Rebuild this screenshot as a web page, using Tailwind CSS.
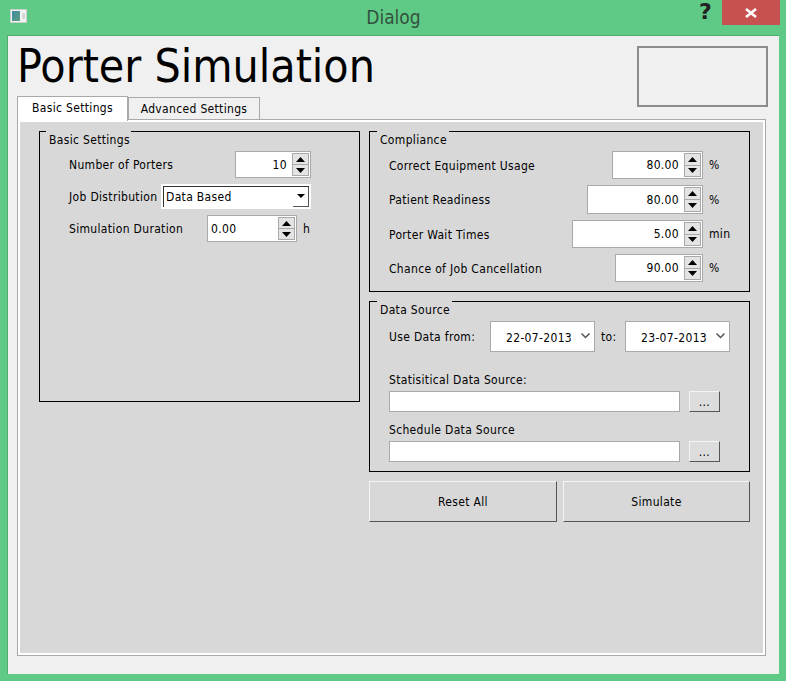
<!DOCTYPE html>
<html lang="en">
  <head>
    <meta charset="UTF-8" />
    <meta name="viewport" content="width=device-width, initial-scale=1.0" />
    <title>Dialog</title>
    <script src="https://cdn.jsdelivr.net/npm/@tailwindcss/browser@4"></script>
  </head>
  <body class="bg-[#5fca85] h-[681px] w-[786px] overflow-hidden flex flex-col font-['DejaVu_Sans_Condensed','Noto_Sans',sans-serif] text-[12px] tracking-[0.33px] text-black">
    <!-- title bar -->
    <div class="h-[35px] shrink-0 flex items-start relative">
      <div class="ml-[10px] mt-[9px] w-[17px] h-[14px] bg-[#f2f4f4] border border-[#c8d0cc] flex gap-[2px] p-[1px]">
        <div class="w-[8px] h-[10px] bg-gradient-to-br from-[#3f8aa0] to-[#5f9f80]"></div>
        <div class="w-[3px] h-[6px] mt-[2px] bg-[#d5d8d8]"></div>
      </div>
      <div class="flex-1 text-center text-[19px] tracking-normal leading-[35px] text-[#33503f] pl-[61px]">Dialog</div>
      <div class="text-[22px] leading-[24px] font-bold text-[#222] font-['DejaVu_Sans',sans-serif] mr-[10px]">?</div>
      <div class="w-[58px] h-[25px] bg-[#c75050] flex items-center justify-center mr-[6px]">
        <svg width="12" height="10" viewBox="0 0 12 10"><path d="M1 1 L11 9 M11 1 L1 9" fill="none" stroke="#fff" stroke-width="2.6"/></svg>
      </div>
    </div>

    <!-- client area -->
    <div class="mx-[7px] mb-[7px] flex-1 bg-[#f0f0f0] border-t border-l border-[#50ab6f] pl-[9px] pr-[13px] flex flex-col">
      <div class="flex h-[60px] justify-between">
        <h1 class="text-[46px] tracking-normal leading-[60px] font-normal">Porter Simulation</h1>
        <div class="w-[131px] h-[61px] mt-[10px] -mr-[2px] border-[2px] border-[#8c8c8c]"></div>
      </div>

      <!-- tabs -->
      <div class="flex items-end h-[24px] shrink-0 mt-[-1px] relative z-10">
        <div class="w-[111px] h-[25px] bg-white border border-b-0 border-[#a9a9a9] text-center leading-[23px] mb-[-2px]">Basic Settings</div>
        <div class="w-[132px] h-[22px] bg-[#f0f0f0] border border-b-0 border-[#a9a9a9] text-center leading-[23px]">Advanced Settings</div>
      </div>

      <div class="w-[749px] h-[537px] border border-[#a9a9a9] bg-[#d8d8d8] shadow-[inset_0_0_0_2px_#fff] pl-[21px] pr-[15px] pt-[11px] flex gap-[9px]">
        <!-- left group -->
        <div class="w-[321px] h-[271px] shrink-0 border border-black relative pt-[19px] pl-[29px]">
          <span class="absolute left-[6px] -top-[1px] bg-[#d8d8d8] pt-[1px] pl-[3px] pr-[1px] leading-[16px]">Basic Settings</span>
          <div class="flex items-center h-[27px] w-[242px]">
            <span class="flex-1">Number of Porters</span>
            <div class="w-[76px] h-[27px] bg-white border border-[#a9a9a9] flex items-center justify-end">
              <span class="pr-[5px] pt-[1px]">10</span>
              <div class="w-[17px] h-[23px] mr-[1px] flex flex-col">
                <div class="flex-1 bg-[#e4e4e4] border border-[#a9a9a9] flex items-center justify-center"><svg width="9" height="5" viewBox="0 0 9 5"><path d="M4.5 0 L9 5 H0 Z"/></svg></div>
                <div class="flex-1 bg-[#e4e4e4] border border-t-0 border-[#a9a9a9] flex items-center justify-center"><svg width="9" height="5" viewBox="0 0 9 5"><path d="M0 0 H9 L4.5 5 Z"/></svg></div>
              </div>
            </div>
          </div>
          <div class="flex items-center h-[25px] mt-[6px] w-[242px]">
            <span class="w-[92px] shrink-0 whitespace-nowrap">Job Distribution</span>
            <div class="w-[150px] h-[25px] bg-white border-[2px] border-white flex items-center relative">
              <div class="absolute inset-0 border-l border-t border-[#333]"></div>
              <span class="pl-[3px] flex-1">Data Based</span>
              <div class="w-[16px] h-[21px] border-r border-b border-[#555] flex items-center justify-center"><svg width="8" height="4" viewBox="0 0 8 4"><path d="M0 0 H8 L4 4 Z"/></svg></div>
            </div>
          </div>
          <div class="flex items-center h-[27px] mt-[6px] w-[242px]">
            <span class="w-[138px] shrink-0">Simulation Duration</span>
            <div class="w-[90px] h-[27px] bg-white border border-[#a9a9a9] flex items-center">
              <span class="flex-1 pl-[3px] pt-[1px]">0.00</span>
              <div class="w-[17px] h-[23px] mr-[1px] flex flex-col">
                <div class="flex-1 bg-[#e4e4e4] border border-[#a9a9a9] flex items-center justify-center"><svg width="9" height="5" viewBox="0 0 9 5"><path d="M4.5 0 L9 5 H0 Z"/></svg></div>
                <div class="flex-1 bg-[#e4e4e4] border border-t-0 border-[#a9a9a9] flex items-center justify-center"><svg width="9" height="5" viewBox="0 0 9 5"><path d="M0 0 H9 L4.5 5 Z"/></svg></div>
              </div>
            </div>
            <span class="ml-[6px]">h</span>
          </div>
        </div>

        <!-- right column -->
        <div class="w-[381px] shrink-0 flex flex-col">
          <div class="h-[161px] border border-black relative pt-[19px] pl-[19px]">
            <span class="absolute left-[7px] -top-[1px] bg-[#d8d8d8] pt-[1px] pl-[3px] pr-[2px] leading-[16px]">Compliance</span>
            <div class="flex items-center h-[28px] w-[347px]">
              <span class="flex-1 pt-[1px]">Correct Equipment Usage</span>
              <div class="w-[91px] h-[28px] bg-white border border-[#a9a9a9] flex items-center justify-end">
                <span class="pr-[5px]">80.00</span>
                <div class="w-[17px] h-[24px] mr-[1px] flex flex-col">
                  <div class="flex-1 bg-[#e4e4e4] border border-[#a9a9a9] flex items-center justify-center"><svg width="9" height="5" viewBox="0 0 9 5"><path d="M4.5 0 L9 5 H0 Z"/></svg></div>
                  <div class="flex-1 bg-[#e4e4e4] border border-t-0 border-[#a9a9a9] flex items-center justify-center"><svg width="9" height="5" viewBox="0 0 9 5"><path d="M0 0 H9 L4.5 5 Z"/></svg></div>
                </div>
              </div>
              <span class="w-[27px] ml-[6px] shrink-0">%</span>
            </div>
            <div class="flex items-center h-[29px] mt-[6px] w-[347px]">
              <span class="flex-1">Patient Readiness</span>
              <div class="w-[116px] h-[29px] bg-white border border-[#a9a9a9] flex items-center justify-end">
                <span class="pr-[5px] pt-[1px]">80.00</span>
                <div class="w-[17px] h-[25px] mr-[1px] flex flex-col">
                  <div class="flex-1 bg-[#e4e4e4] border border-[#a9a9a9] flex items-center justify-center"><svg width="9" height="5" viewBox="0 0 9 5"><path d="M4.5 0 L9 5 H0 Z"/></svg></div>
                  <div class="flex-1 bg-[#e4e4e4] border border-t-0 border-[#a9a9a9] flex items-center justify-center"><svg width="9" height="5" viewBox="0 0 9 5"><path d="M0 0 H9 L4.5 5 Z"/></svg></div>
                </div>
              </div>
              <span class="w-[27px] ml-[6px] shrink-0">%</span>
            </div>
            <div class="flex items-center h-[28px] mt-[6px] w-[347px]">
              <span class="flex-1 pt-[1px]">Porter Wait Times</span>
              <div class="w-[131px] h-[28px] bg-white border border-[#a9a9a9] flex items-center justify-end">
                <span class="pr-[5px]">5.00</span>
                <div class="w-[17px] h-[24px] mr-[1px] flex flex-col">
                  <div class="flex-1 bg-[#e4e4e4] border border-[#a9a9a9] flex items-center justify-center"><svg width="9" height="5" viewBox="0 0 9 5"><path d="M4.5 0 L9 5 H0 Z"/></svg></div>
                  <div class="flex-1 bg-[#e4e4e4] border border-t-0 border-[#a9a9a9] flex items-center justify-center"><svg width="9" height="5" viewBox="0 0 9 5"><path d="M0 0 H9 L4.5 5 Z"/></svg></div>
                </div>
              </div>
              <span class="w-[27px] ml-[6px] shrink-0">min</span>
            </div>
            <div class="flex items-center h-[28px] mt-[6px] w-[347px]">
              <span class="flex-1 pt-[1px]">Chance of Job Cancellation</span>
              <div class="w-[88px] h-[28px] bg-white border border-[#a9a9a9] flex items-center justify-end">
                <span class="pr-[5px]">90.00</span>
                <div class="w-[17px] h-[24px] mr-[1px] flex flex-col">
                  <div class="flex-1 bg-[#e4e4e4] border border-[#a9a9a9] flex items-center justify-center"><svg width="9" height="5" viewBox="0 0 9 5"><path d="M4.5 0 L9 5 H0 Z"/></svg></div>
                  <div class="flex-1 bg-[#e4e4e4] border border-t-0 border-[#a9a9a9] flex items-center justify-center"><svg width="9" height="5" viewBox="0 0 9 5"><path d="M0 0 H9 L4.5 5 Z"/></svg></div>
                </div>
              </div>
              <span class="w-[27px] ml-[6px] shrink-0">%</span>
            </div>
          </div>

          <div class="h-[171px] mt-[9px] border border-black relative pt-[19px] pl-[19px]">
            <span class="absolute left-[7px] -top-[1px] bg-[#d8d8d8] pt-[1px] pl-[3px] pr-[2px] leading-[16px]">Data Source</span>
            <div class="flex items-center h-[31px]">
              <span class="w-[101px] shrink-0">Use Data from:</span>
              <div class="w-[105px] h-[31px] bg-white border border-[#a9a9a9] flex items-center pl-[15px] pt-[3px] relative">
                <span>22-07-2013</span>
                <svg class="absolute right-[4px] top-[11px]" width="9" height="6" viewBox="0 0 9 6"><path d="M0.5 0.5 L4.5 4.5 L8.5 0.5" fill="none" stroke="#555" stroke-width="1.5"/></svg>
              </div>
              <span class="w-[30px] pl-[6px] pt-[1px] shrink-0">to:</span>
              <div class="w-[105px] h-[31px] bg-white border border-[#a9a9a9] flex items-center pl-[15px] pt-[3px] relative">
                <span>23-07-2013</span>
                <svg class="absolute right-[4px] top-[11px]" width="9" height="6" viewBox="0 0 9 6"><path d="M0.5 0.5 L4.5 4.5 L8.5 0.5" fill="none" stroke="#555" stroke-width="1.5"/></svg>
              </div>
            </div>
            <div class="leading-[16px] mt-[20px]">Statisitical Data Source:</div>
            <div class="flex gap-[9px] mt-[3px]">
              <div class="w-[291px] h-[21px] bg-white border border-[#a9a9a9]"></div>
              <div class="w-[31px] h-[21px] bg-[#dcdcdc] border border-[#f5f5f5] border-r-[#555] border-b-[#555] text-center leading-[20px]">...</div>
            </div>
            <div class="leading-[16px] mt-[10px]">Schedule Data Source</div>
            <div class="flex gap-[9px] mt-[3px]">
              <div class="w-[291px] h-[21px] bg-white border border-[#a9a9a9]"></div>
              <div class="w-[31px] h-[21px] bg-[#dcdcdc] border border-[#f5f5f5] border-r-[#555] border-b-[#555] text-center leading-[20px]">...</div>
            </div>
          </div>

          <div class="flex gap-[6px] mt-[9px]">
            <div class="w-[188px] h-[41px] border border-[#f5f5f5] border-r-[#555] border-b-[#555] flex items-center justify-center">Reset All</div>
            <div class="w-[187px] h-[41px] border border-[#f5f5f5] border-r-[#555] border-b-[#555] flex items-center justify-center">Simulate</div>
          </div>
        </div>
      </div>
    </div>
  </body>
</html>
